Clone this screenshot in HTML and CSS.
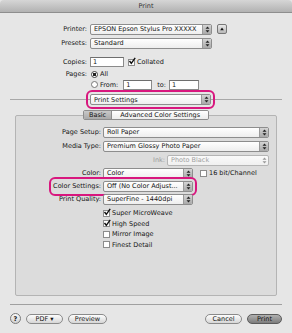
FILE: index.html
```html
<!DOCTYPE html>
<html>
<head>
<meta charset="utf-8">
<link rel="stylesheet" href="styles.css">
</head>
<body>
<div class="window">
  <div class="titlebar">Print</div>

  <div class="top">
    <div class="row r-printer">
      <span class="lbl">Printer:</span>
      <div class="popup w-top"><span class="val">EPSON Epson Stylus Pro XXXXX</span><span class="arr"><svg width="5" height="7" viewBox="0 0 5 7"><path d="M2.5 0.5L4.5 2.8H0.5Z M2.5 6.5L4.5 4.2H0.5Z" fill="#222"/></svg></span></div>
      <span class="disc"><svg width="4" height="4" viewBox="0 0 4 4"><path d="M2 0.5L3.8 3.3H0.2Z" fill="#111"/></svg></span>
    </div>
    <div class="row r-presets">
      <span class="lbl">Presets:</span>
      <div class="popup w-top"><span class="val">Standard</span><span class="arr"><svg width="5" height="7" viewBox="0 0 5 7"><path d="M2.5 0.5L4.5 2.8H0.5Z M2.5 6.5L4.5 4.2H0.5Z" fill="#222"/></svg></span></div>
    </div>
    <div class="row r-copies">
      <span class="lbl">Copies:</span>
      <span class="field w-copies">1</span>
      <span class="cb checked cb-collated"><svg width="8" height="8" viewBox="0 0 8 8"><path d="M1.5 4L3.3 6.3L7.2 0.8" stroke="#111" stroke-width="1.4" fill="none"/></svg></span>
      <span class="txt">Collated</span>
    </div>
    <div class="row r-all">
      <span class="lbl">Pages:</span>
      <span class="radio on"></span>
      <span class="txt">All</span>
    </div>
    <div class="row r-from">
      <span class="lbl"></span>
      <span class="radio"></span>
      <span class="txt">From:</span>
      <span class="field w-from">1</span>
      <span class="txt t-to">to:</span>
      <span class="field w-to">1</span>
    </div>
    <div class="row r-sep">
      <div class="popup w-ps hl"><span class="val">Print Settings</span><span class="arr"><svg width="5" height="7" viewBox="0 0 5 7"><path d="M2.5 0.5L4.5 2.8H0.5Z M2.5 6.5L4.5 4.2H0.5Z" fill="#222"/></svg></span></div>
    </div>
  </div>

  <div class="group">
    <div class="tabs">
      <span class="tab sel">Basic</span><span class="tab t-adv">Advanced Color Settings</span>
    </div>
    <div class="grow r-ps">
      <span class="glbl">Page Setup:</span>
      <div class="popup w-wide"><span class="val">Roll Paper</span><span class="arr"><svg width="5" height="7" viewBox="0 0 5 7"><path d="M2.5 0.5L4.5 2.8H0.5Z M2.5 6.5L4.5 4.2H0.5Z" fill="#222"/></svg></span></div>
    </div>
    <div class="grow">
      <span class="glbl">Media Type:</span>
      <div class="popup w-wide"><span class="val">Premium Glossy Photo Paper</span><span class="arr"><svg width="5" height="7" viewBox="0 0 5 7"><path d="M2.5 0.5L4.5 2.8H0.5Z M2.5 6.5L4.5 4.2H0.5Z" fill="#222"/></svg></span></div>
    </div>
    <div class="grow r-ink">
      <span class="glbl-auto dim">Ink:</span>
      <div class="popup w-ink disabled"><span class="val">Photo Black</span><span class="arr"><svg width="5" height="7" viewBox="0 0 5 7"><path d="M2.5 0.5L4.5 2.8H0.5Z M2.5 6.5L4.5 4.2H0.5Z" fill="#999"/></svg></span></div>
    </div>
    <div class="grow r-color">
      <span class="glbl">Color:</span>
      <div class="popup w-narrow"><span class="val">Color</span><span class="arr"><svg width="5" height="7" viewBox="0 0 5 7"><path d="M2.5 0.5L4.5 2.8H0.5Z M2.5 6.5L4.5 4.2H0.5Z" fill="#222"/></svg></span></div>
      <span class="cb cb-16"></span>
      <span class="txt">16 bit/Channel</span>
    </div>
    <div class="grow r-cs">
      <div class="cs-lead">
        <div class="hl cs-box">
          <span class="txt">Color Settings:</span>
          <div class="popup w-narrow"><span class="val">Off (No Color Adjust...</span><span class="arr"><svg width="5" height="7" viewBox="0 0 5 7"><path d="M2.5 0.5L4.5 2.8H0.5Z M2.5 6.5L4.5 4.2H0.5Z" fill="#222"/></svg></span></div>
        </div>
      </div>
    </div>
    <div class="grow r-pq">
      <span class="glbl">Print Quality:</span>
      <div class="popup w-narrow"><span class="val">SuperFine - 1440dpi</span><span class="arr"><svg width="5" height="7" viewBox="0 0 5 7"><path d="M2.5 0.5L4.5 2.8H0.5Z M2.5 6.5L4.5 4.2H0.5Z" fill="#222"/></svg></span></div>
    </div>
    <div class="checks">
      <div class="crow"><span class="cb checked"><svg width="8" height="8" viewBox="0 0 8 8"><path d="M1.5 4L3.3 6.3L7.2 0.8" stroke="#111" stroke-width="1.4" fill="none"/></svg></span><span class="txt">Super MicroWeave</span></div>
      <div class="crow"><span class="cb checked"><svg width="8" height="8" viewBox="0 0 8 8"><path d="M1.5 4L3.3 6.3L7.2 0.8" stroke="#111" stroke-width="1.4" fill="none"/></svg></span><span class="txt">High Speed</span></div>
      <div class="crow"><span class="cb"></span><span class="txt">Mirror Image</span></div>
      <div class="crow"><span class="cb"></span><span class="txt">Finest Detail</span></div>
    </div>
  </div>

  <div class="bottom">
    <span class="help">?</span>
    <span class="btn b-pdf">PDF ▾</span>
    <span class="btn b-preview">Preview</span>
    <span class="spacer"></span>
    <span class="btn b-cancel">Cancel</span>
    <span class="btn b-print">Print</span>
  </div>
</div>
</body>
</html>
```
FILE: styles.css
```css
html, body {
  margin: 0;
  padding: 0;
}
body {
  width: 292px;
  height: 333px;
  background: #e6e6e6;
  font-family: "DejaVu Sans", sans-serif;
  font-size: 6.5px;
  color: #141414;
  overflow: hidden;
}
.window {
  width: 292px;
  height: 333px;
  display: flex;
  flex-direction: column;
}
.titlebar {
  height: 12px;
  line-height: 12px;
  text-align: center;
  background: linear-gradient(#d6d6d6, #b2b2b2);
  border-bottom: 1px solid #8e8e8e;
  border-radius: 4px 4px 0 0;
  color: #333;
}
.top {
  padding-top: 10px;
  display: flex;
  flex-direction: column;
}
.row {
  display: flex;
  align-items: center;
  height: 12px;
}
.lbl {
  width: 87px;
  margin-right: 3px;
  text-align: right;
  flex: none;
}
.txt {
  white-space: nowrap;
}
.r-presets { margin-top: 2px; }
.r-copies { margin-top: 7px; }
.r-all { margin-top: 1px; height: 10px; }
.r-from { height: 11px; }
.r-sep {
  margin-top: 4px;
  height: 11px;
  padding-left: 90px;
  background: linear-gradient(#a8a8a8, #a8a8a8) no-repeat 10px 5px / 272px 1px;
}

.popup {
  flex: none;
  box-sizing: border-box;
  height: 11px;
  border: 1px solid #8d8d8d;
  border-radius: 2px;
  background: linear-gradient(#ffffff, #eeeeee);
  display: flex;
  align-items: center;
  overflow: hidden;
}
.popup .val {
  flex: 1;
  padding-left: 3px;
  white-space: nowrap;
  overflow: hidden;
}
.popup .arr {
  flex: none;
  width: 8px;
  height: 100%;
  display: flex;
  align-items: center;
  justify-content: center;
  background: linear-gradient(#d4d4d4, #a9a9a9);
  border-left: 1px solid #9a9a9a;
}
.popup.disabled {
  border-color: #b5b5b5;
  background: linear-gradient(#fafafa, #f0f0f0);
  color: #a0a0a0;
}
.popup.disabled .arr {
  background: none;
  border-left: none;
}
.dim { color: #9a9a9a; }
.w-top { width: 122px; }
.w-ps { width: 121px; }
.w-wide { width: 166px; }
.w-ink { width: 102px; }
.w-narrow { width: 90px; }

.hl {
  outline: 2px solid #d8177e;
  outline-offset: 2px;
  border-radius: 2px;
}

.disc {
  flex: none;
  box-sizing: border-box;
  width: 10px;
  height: 10px;
  margin-left: 5px;
  border: 1px solid #777;
  border-radius: 2px;
  background: linear-gradient(#e8e8e8, #b8b8b8);
  display: flex;
  align-items: center;
  justify-content: center;
}

.field {
  flex: none;
  box-sizing: border-box;
  height: 10px;
  line-height: 8px;
  padding-left: 2px;
  background: #fff;
  border: 1px solid #8a8a8a;
  border-top-color: #6e6e6e;
}
.w-copies { width: 34px; }
.w-from { width: 29px; margin-left: 5px; }
.w-to { width: 30px; }
.t-to { margin-left: 5px; margin-right: 3px; }

.cb {
  flex: none;
  box-sizing: border-box;
  width: 7px;
  height: 7px;
  background: #fff;
  border: 1px solid #8c8c8c;
  margin-right: 2px;
  display: flex;
  align-items: center;
  justify-content: center;
  overflow: visible;
}
.cb svg { flex: none; margin-top: -2px; margin-left: 1px; }
.cb-collated { margin-left: 4px; margin-right: 2px; }
.cb-16 { margin-left: 7px; }

.radio {
  flex: none;
  box-sizing: border-box;
  width: 7px;
  height: 7px;
  border-radius: 50%;
  border: 1px solid #777;
  background: #fff;
  margin-left: 1px;
  margin-right: 2px;
}
.radio.on {
  background: radial-gradient(circle, #222 0 1.6px, #fff 1.9px);
  border-color: #444;
}

.group {
  box-sizing: border-box;
  margin: 10px 15px 0;
  height: 181px;
  border: 1px solid #b4b4b4;
  border-radius: 2px;
  background: #dcdcdc;
  display: flex;
  flex-direction: column;
}
.tabs {
  margin-top: -6px;
  align-self: center;
  display: flex;
  height: 10px;
  box-sizing: border-box;
  border: 1px solid #8d8d8d;
  border-radius: 2px;
  overflow: hidden;
}
.tab {
  padding: 0 5px;
  line-height: 8px;
  background: linear-gradient(#ffffff, #ececec);
  white-space: nowrap;
}
.tab.t-adv { padding: 0 8px; }
.tab.sel {
  background: linear-gradient(#c9c9c9, #a9a9a9);
  border-right: 1px solid #8d8d8d;
}
.grow {
  display: flex;
  align-items: center;
  height: 12px;
  margin-top: 2px;
}
.r-ps { margin-top: 6px; }
.r-color, .r-cs, .r-pq { margin-top: 1px; }
.glbl {
  width: 85px;
  margin-right: 2px;
  text-align: right;
  flex: none;
  white-space: nowrap;
}
.r-ink {
  justify-content: flex-end;
  padding-right: 7px;
}
.glbl-auto { margin-right: 2px; }
.cs-lead {
  width: 177px;
  display: flex;
  justify-content: flex-end;
}
.cs-box {
  display: flex;
  align-items: center;
  gap: 2px;
}
.checks {
  margin-top: 3px;
  padding-left: 87px;
  display: flex;
  flex-direction: column;
}
.crow {
  height: 10.5px;
  display: flex;
  align-items: center;
}

.bottom {
  margin: 8px 10px 0;
  border-top: 1px solid #a0a0a0;
  padding-top: 8px;
  display: flex;
  align-items: center;
}
.spacer { flex: 1; }
.help {
  flex: none;
  box-sizing: border-box;
  width: 11px;
  height: 11px;
  border-radius: 50%;
  border: 1px solid #7a7a7a;
  background: linear-gradient(#fafafa, #d0d0d0);
  font-size: 6.5px;
  font-weight: bold;
  display: flex;
  align-items: center;
  justify-content: center;
}
.btn {
  flex: none;
  box-sizing: border-box;
  height: 10px;
  line-height: 8px;
  border: 1px solid #8a8a8a;
  border-radius: 5px;
  background: linear-gradient(#fdfdfd, #d6d6d6);
  text-align: center;
  white-space: nowrap;
}
.b-pdf { width: 37px; margin-left: 5px; }
.b-preview { width: 39px; margin-left: 5px; }
.b-cancel { width: 37px; }
.b-print {
  width: 35px;
  margin-left: 5px;
  background: linear-gradient(#b0b0b0, #7c7c7c);
  border-color: #5a5a5a;
  color: #111;
}
```
